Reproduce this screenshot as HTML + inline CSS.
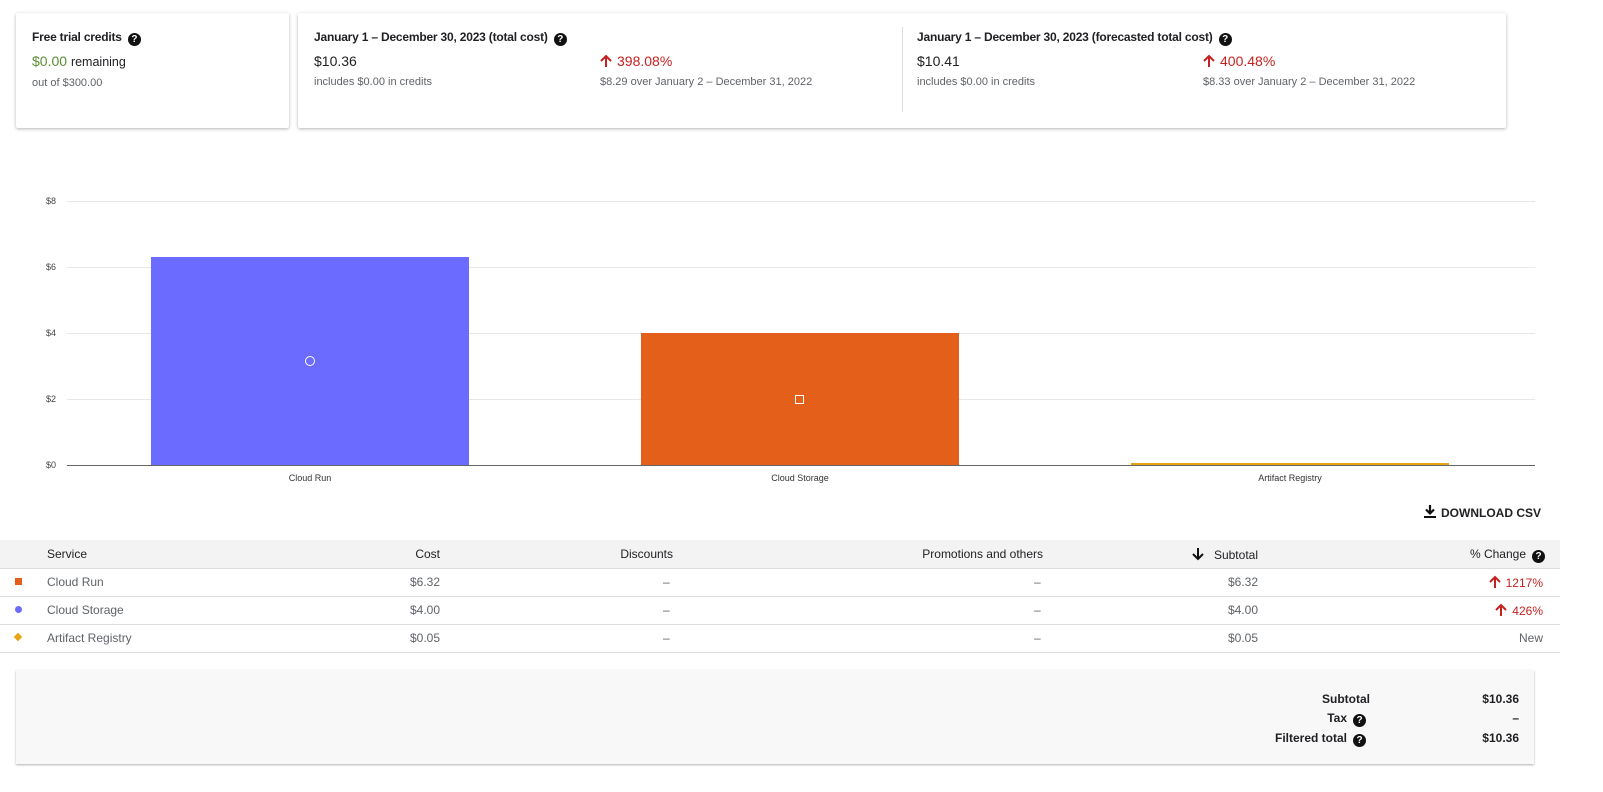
<!DOCTYPE html>
<html><head><style>
body{margin:0;width:1603px;height:792px;background:#fff;font-family:"Liberation Sans",sans-serif;color:#202124;position:relative;overflow:hidden}
.a{position:absolute;white-space:nowrap}
.r{position:absolute;white-space:nowrap;text-align:right}
.card{position:absolute;background:#fff;box-shadow:0 1px 3px rgba(0,0,0,.3);border-radius:2px}
.h{font-size:12px;font-weight:bold;letter-spacing:-.2px}
.q{display:inline-block;width:13px;height:13px;border-radius:50%;background:#111;color:#fff;font-size:10px;font-weight:bold;text-align:center;line-height:13px;vertical-align:-1px;margin-left:6px}
.big{font-size:14px}
.sm{font-size:11px;color:#5f6368}
.red{color:#c5221f}
.grid{position:absolute;left:67px;width:1468px;height:1px;background:#e8e8e8}
.yl{position:absolute;left:46px;font-size:9px;color:#444}
.xl{position:absolute;font-size:9px;color:#333;text-align:center;width:200px}
.t{font-size:12px}
.row{position:absolute;left:0;width:1560px;height:28px;border-bottom:1px solid #ddd}
.g{color:#5f6368}
svg.up{vertical-align:-2px;margin-right:5px}
</style></head><body>
<div class="card" style="left:16px;top:13px;width:273px;height:115px">
<div class="a h" style="left:16px;top:17px">Free trial credits<span class="q">?</span></div>
<div class="a" style="left:16px;top:40px;font-size:14px"><span style="color:#5b8d37">$0.00</span> <span style="font-size:12.5px">remaining</span></div>
<div class="a sm" style="left:16px;top:64px">out of $300.00</div>
</div>
<div class="card" style="left:298px;top:13px;width:1208px;height:115px">
<div class="a h" style="left:16px;top:17px">January 1 – December 30, 2023 (total cost)<span class="q">?</span></div>
<div class="a big" style="left:16px;top:40px">$10.36</div>
<div class="a sm" style="left:16px;top:63px">includes $0.00 in credits</div>
<div class="a big red" style="left:302px;top:40px"><svg class="up" width="12" height="14" viewBox="0 0 12 14"><path d="M6 13V2M1 7l5-5 5 5" stroke="#c5221f" stroke-width="2" fill="none"/></svg>398.08%</div>
<div class="a sm" style="left:302px;top:63px">$8.29 over January 2 – December 31, 2022</div>
<div class="a" style="left:604px;top:14px;width:1px;height:85px;background:#ddd"></div>
<div class="a h" style="left:619px;top:17px">January 1 – December 30, 2023 (forecasted total cost)<span class="q">?</span></div>
<div class="a big" style="left:619px;top:40px">$10.41</div>
<div class="a sm" style="left:619px;top:63px">includes $0.00 in credits</div>
<div class="a big red" style="left:905px;top:40px"><svg class="up" width="12" height="14" viewBox="0 0 12 14"><path d="M6 13V2M1 7l5-5 5 5" stroke="#c5221f" stroke-width="2" fill="none"/></svg>400.48%</div>
<div class="a sm" style="left:905px;top:63px">$8.33 over January 2 – December 31, 2022</div>
</div>

<div class="grid" style="top:201px"></div><div class="grid" style="top:267px"></div><div class="grid" style="top:333px"></div><div class="grid" style="top:399px"></div>
<div class="grid" style="top:465px;background:#666"></div>
<div class="yl" style="top:196px">$8</div><div class="yl" style="top:262px">$6</div><div class="yl" style="top:328px">$4</div><div class="yl" style="top:394px">$2</div><div class="yl" style="top:460px">$0</div>
<div class="a" style="left:151px;top:257px;width:318px;height:208px;background:#6b6cff"></div>
<div class="a" style="left:305px;top:356px;width:8px;height:8px;border:1.5px solid #fff;border-radius:50%"></div>
<div class="a" style="left:641px;top:333px;width:318px;height:132px;background:#e45f19"></div>
<div class="a" style="left:795px;top:395px;width:7px;height:7px;border:1.5px solid #fff"></div>
<div class="a" style="left:1131px;top:463px;width:318px;height:2px;background:#e8a317"></div>
<div class="xl" style="left:210px;top:473px">Cloud Run</div>
<div class="xl" style="left:700px;top:473px">Cloud Storage</div>
<div class="xl" style="left:1190px;top:473px">Artifact Registry</div>

<div class="a" style="left:1424px;top:505px;font-size:12px;font-weight:bold"><svg width="12" height="13" viewBox="0 0 12 13" style="vertical-align:-1px;margin-right:5px"><path d="M6 0v8M2 4.5l4 4 4-4" stroke="#111" stroke-width="2.2" fill="none"/><rect x="0" y="11" width="12" height="2" fill="#111"/></svg>DOWNLOAD CSV</div>

<div class="a" style="left:0;top:540px;width:1560px;height:28px;background:#f3f3f3;border-bottom:1px solid #ddd"></div>
<div class="a t" style="left:47px;top:547px">Service</div>
<div class="r t" style="right:1163px;top:547px">Cost</div>
<div class="r t" style="right:930px;top:547px">Discounts</div>
<div class="r t" style="right:560px;top:547px">Promotions and others</div>
<div class="r t" style="right:345px;top:547px"><svg width="12" height="14" viewBox="0 0 12 14" style="vertical-align:-2px;margin-right:10px"><path d="M6 1v11M1 7l5 5 5-5" stroke="#111" stroke-width="2" fill="none"/></svg>Subtotal</div>
<div class="r t" style="right:58px;top:547px">% Change<span class="q">?</span></div>

<div class="row" style="top:568px"></div><div class="row" style="top:596px"></div><div class="row" style="top:624px"></div>
<div class="a" style="left:15px;top:578px;width:7px;height:7px;background:#e45f19"></div>
<div class="a" style="left:15px;top:606px;width:7px;height:7px;border-radius:50%;background:#6b6cff"></div>
<div class="a" style="left:15px;top:634px;width:6px;height:6px;background:#e8a317;transform:rotate(45deg)"></div>
<div class="a t g" style="left:47px;top:575px">Cloud Run</div>
<div class="a t g" style="left:47px;top:603px">Cloud Storage</div>
<div class="a t g" style="left:47px;top:631px">Artifact Registry</div>
<div class="r t g" style="right:1163px;top:575px">$6.32</div><div class="r t g" style="right:1163px;top:603px">$4.00</div><div class="r t g" style="right:1163px;top:631px">$0.05</div>
<div class="a t g" style="left:663px;top:575px">–</div><div class="a t g" style="left:663px;top:603px">–</div><div class="a t g" style="left:663px;top:631px">–</div>
<div class="a t g" style="left:1034px;top:575px">–</div><div class="a t g" style="left:1034px;top:603px">–</div><div class="a t g" style="left:1034px;top:631px">–</div>
<div class="r t g" style="right:345px;top:575px">$6.32</div><div class="r t g" style="right:345px;top:603px">$4.00</div><div class="r t g" style="right:345px;top:631px">$0.05</div>
<div class="r t red" style="right:60px;top:575px"><svg class="up" width="12" height="14" viewBox="0 0 12 14"><path d="M6 13V2M1 7l5-5 5 5" stroke="#c5221f" stroke-width="2" fill="none"/></svg>1217%</div>
<div class="r t red" style="right:60px;top:603px"><svg class="up" width="12" height="14" viewBox="0 0 12 14"><path d="M6 13V2M1 7l5-5 5 5" stroke="#c5221f" stroke-width="2" fill="none"/></svg>426%</div>
<div class="r t g" style="right:60px;top:631px">New</div>

<div class="a" style="left:16px;top:670px;width:1518px;height:94px;background:#f8f8f8;box-shadow:0 1px 2px rgba(0,0,0,.3)"></div>
<div class="r t" style="right:233px;top:692px;font-weight:bold">Subtotal</div>
<div class="r t" style="right:237px;top:711px;font-weight:bold">Tax<span class="q">?</span></div>
<div class="r t" style="right:237px;top:731px;font-weight:bold">Filtered total<span class="q">?</span></div>
<div class="r t" style="right:84px;top:692px;font-weight:bold">$10.36</div>
<div class="r t" style="right:84px;top:711px;font-weight:bold">–</div>
<div class="r t" style="right:84px;top:731px;font-weight:bold">$10.36</div>
</body></html>
